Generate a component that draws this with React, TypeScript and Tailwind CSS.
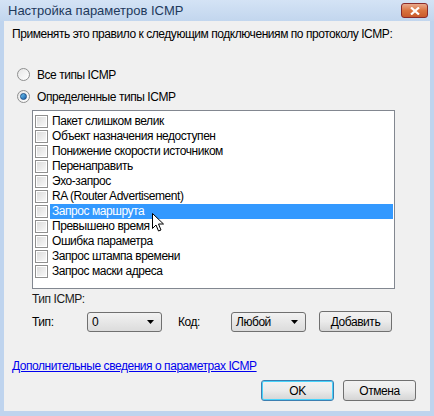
import { useState } from 'react';

const TYPES = [
    'Пакет слишком велик',
    'Объект назначения недоступен',
    'Понижение скорости источником',
    'Перенаправить',
    'Эхо-запрос',
    'RA (Router Advertisement)',
    'Запрос маршрута',
    'Превышено время',
    'Ошибка параметра',
    'Запрос штампа времени',
    'Запрос маски адреса',
];

const font = { fontFamily: '"Liberation Sans", Arial, sans-serif' };

const Radio = ({ checked }: { checked: boolean }) => (
    <span className="w-[13px] h-[13px] rounded-full border border-[#8e8f8f] bg-gradient-to-br from-[#e6e6e6] to-[#ffffff] flex items-center justify-center">
        {checked && <span className="w-[7px] h-[7px] rounded-full bg-gradient-to-br from-[#6dc6f2] to-[#1a5fa8] border border-[#1b4e87]" />}
    </span>
);

const Check = () => (
    <span className="w-[13px] h-[13px] border border-[#8f8f8f] bg-white flex items-center justify-center shrink-0">
        <span className="w-[9px] h-[9px] bg-gradient-to-br from-[#dcdcdc] to-[#f8f8f8]" />
    </span>
);

const Combo = ({ value, w }: { value: string; w: string }) => (
    <div className={`${w} h-[20px] rounded-[3px] border border-[#707070] bg-gradient-to-b from-[#f2f2f2] to-[#dcdcdc] flex items-center justify-between pl-[4px] pr-[7px]`}>
        <span>{value}</span>
        <svg width="7" height="4" viewBox="0 0 7 4"><path d="M0 0h7L3.5 4z" fill="#000" /></svg>
    </div>
);

const Btn = ({ label, w, focus }: { label: string; w: string; focus?: boolean }) => (
    <div className={`${w} h-[21px] rounded-[3px] border ${focus ? 'border-[#3c7fb1] shadow-[inset_0_0_0_1px_#48d3fb]' : 'border-[#707070]'} bg-gradient-to-b from-[#f2f2f2] via-[#ebebeb] to-[#d5d5d5] flex items-center justify-center`}>
        {label}
    </div>
);

export default function App() {
    const [mode] = useState<'all' | 'some'>('some');

    return (
        <div className="w-[434px] h-[416px] bg-[#bfd4ee] flex flex-col text-[12px] tracking-[-0.45px] text-black whitespace-nowrap" style={font}>
            {/* Title bar */}
            <div className="h-[21px] flex items-center justify-between pl-[8px] pr-[6px] bg-gradient-to-b from-[#d4e3f5] to-[#c2d6ee]">
                <span className="text-[13px] tracking-normal text-[#1e395b]">Настройка параметров ICMP</span>
                <div className="w-[27px] h-[15px] rounded-[3px] border border-[#8b2b2b] bg-gradient-to-b from-[#e8a88c] via-[#d9733f] to-[#c95a2b] flex items-center justify-center">
                    <svg width="10" height="8" viewBox="0 0 10 8">
                        <path d="M1 0.5L9 7.5M9 0.5L1 7.5" stroke="#fff" strokeWidth="2.2" />
                    </svg>
                </div>
            </div>

            {/* Client */}
            <div className="flex-1 mx-[4px] mb-[5px] bg-[#f0f0f0] relative flex flex-col pl-[8px]">
                <p className="mt-[6px] h-[15px] leading-[15px]">Применять это правило к следующим подключениям по протоколу ICMP:</p>

                <div className="mt-[25px] flex items-center gap-[7px] h-[15px] pl-[5px]">
                    <Radio checked={mode === 'all'} />
                    <span>Все типы ICMP</span>
                </div>
                <div className="mt-[7px] flex items-center gap-[7px] h-[15px] pl-[5px]">
                    <Radio checked={mode === 'some'} />
                    <span>Определенные типы ICMP</span>
                </div>

                {/* List */}
                <div className="mt-[6px] ml-[20px] w-[363px] h-[179px] border border-[#828790] bg-white pt-[3px] pl-[2px] pr-[1px]">
                    {TYPES.map((t, i) => (
                        <div key={t} className="h-[15px] flex items-center gap-[2px]">
                            <Check />
                            <span className={`flex-1 h-[15px] leading-[15px] pl-[2px] ${i === 6 ? 'bg-[#3399ff] text-white' : ''}`}>{t}</span>
                        </div>
                    ))}
                </div>

                <p className="mt-[3px] ml-[20px] h-[15px] leading-[15px] text-[#1a1a1a]">Тип ICMP:</p>
                <div className="mt-[4px] ml-[20px] flex items-center">
                    <span className="w-[55px]">Тип:</span>
                    <Combo value="0" w="w-[75px]" />
                    <span className="ml-[16px] w-[53px]">Код:</span>
                    <Combo value="Любой" w="w-[75px]" />
                    <div className="ml-[13px]"><Btn label="Добавить" w="w-[73px]" /></div>
                </div>

                <a className="mt-[27px] h-[15px] leading-[15px] text-[#0000ee] underline self-start">Дополнительные сведения о параметрах ICMP</a>

                <div className="mt-[6px] flex justify-end gap-[9px] pr-[14px]">
                    <Btn label="OK" w="w-[73px]" focus />
                    <Btn label="Отмена" w="w-[73px]" />
                </div>

                {/* mouse pointer */}
                <svg className="absolute left-[148px] top-[192px]" width="12" height="19" viewBox="0 0 12 19">
                    <path d="M0.5 0.5V15.5L4 12L6.5 18L9 17L6.5 11H11.5Z" fill="#fff" stroke="#000" strokeWidth="1" strokeLinejoin="round" />
                </svg>
            </div>
        </div>
    );
}
